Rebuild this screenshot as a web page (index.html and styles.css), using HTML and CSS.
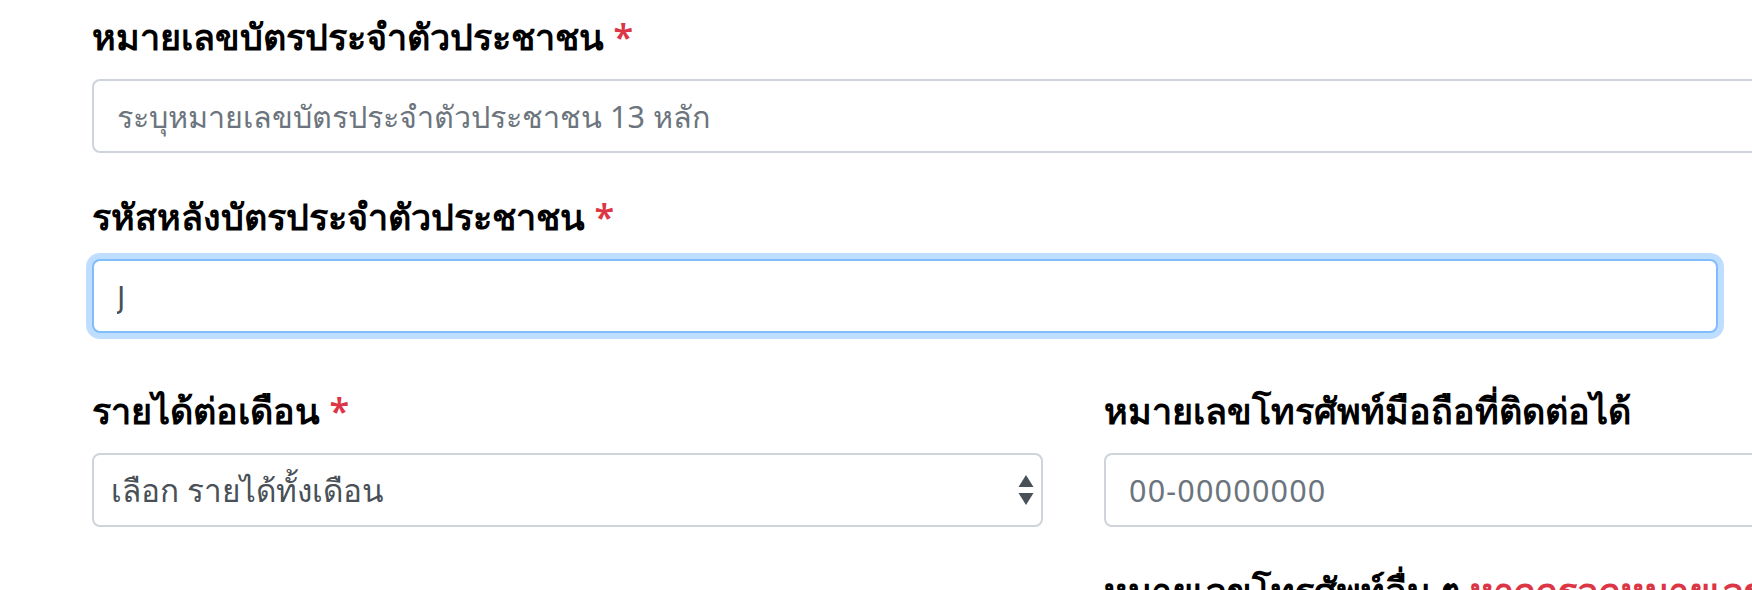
FILE: index.html
```html
<!DOCTYPE html>
<html lang="th">

<head>
    <meta charset="UTF-8">
    <meta name="viewport" content="width=device-width, initial-scale=1.0">
    <title>ลงทะเบียน</title>

    <link rel="stylesheet" href="styles.css">
</head>

<body>
    <div class="container">
        <form id="regForm">
            <div class="field">
                <label for="idcard">หมายเลขบัตรประจำตัวประชาชน <span class="req">*</span></label>
                <input type="text" id="idcard" class="control wide" placeholder="ระบุหมายเลขบัตรประจำตัวประชาชน 13 หลัก">
            </div>

            <div class="field">
                <label for="laser">รหัสหลังบัตรประจำตัวประชาชน <span class="req">*</span></label>
                <input type="text" id="laser" class="control focused" value="J">
            </div>

            <div class="row">
                <div class="col">
                    <label for="income">รายได้ต่อเดือน <span class="req">*</span></label>
                    <div class="select-wrap">
                        <select id="income" class="control">
                            <option>เลือก รายได้ทั้งเดือน</option>
                        </select>
                        <svg class="arrows" width="16" height="30" viewBox="0 0 16 30">
                            <path d="M8 0 L15.5 12 L0.5 12 Z" fill="#495057" />
                            <path d="M0.5 18 L15.5 18 L8 30 Z" fill="#495057" />
                        </svg>
                    </div>
                </div>

                <div class="col">
                    <label for="mobile">หมายเลขโทรศัพท์มือถือที่ติดต่อได้</label>
                    <input type="text" id="mobile" class="control" placeholder="00-00000000">

                    <label for="phone2" class="next-label">หมายเลขโทรศัพท์อื่น ๆ <span class="note">หากกรอกหมายเลขโทรศัพท์นี้ จะใช้ในการติดต่อกลับ</span></label>
                </div>
            </div>
        </form>
    </div>
</body>

</html>
```

FILE: styles.css
```css
html, body {
    margin: 0;
    overflow: hidden;
    background: #fff;
}

body {
    font-family: "Noto Sans", "DejaVu Sans", sans-serif;
    color: #000;
}

.container {
    width: 1963px;
    padding: 10px 0 0 92px;
}

label {
    display: block;
    font-size: 36px;
    font-weight: 600;
    line-height: 53px;
    margin-bottom: 16px;
    white-space: nowrap;
}

.req {
    color: #dc3545;
}

.note {
    color: #dc3545;
}

.field {
    margin-bottom: 37px;
}

.control {
    display: block;
    box-sizing: border-box;
    width: 100%;
    height: 74px;
    padding: 12px 23px;
    font-family: "Noto Sans", "DejaVu Sans", sans-serif;
    font-size: 30.5px;
    line-height: 46px;
    color: #495057;
    background: #fff;
    border: 2px solid #ced4da;
    border-radius: 8px;
    outline: none;
}

.control::placeholder {
    color: #6c757d;
}

#mobile::placeholder {
    letter-spacing: 1.2px;
}

.focused {
    width: 1626px;
    border-color: #80bdff;
    box-shadow: 0 0 0 6px rgba(0, 123, 255, 0.25);
}

.row {
    display: flex;
    gap: 61px;
    padding-top: 14px;
}

.col {
    width: 951px;
}

.select-wrap {
    position: relative;
}

select.control {
    appearance: none;
    -webkit-appearance: none;
    padding-left: 17px;
    font-size: 31.5px;
}

.arrows {
    position: absolute;
    right: 9px;
    top: 22px;
}

.next-label {
    margin-top: 37px;
}
```
